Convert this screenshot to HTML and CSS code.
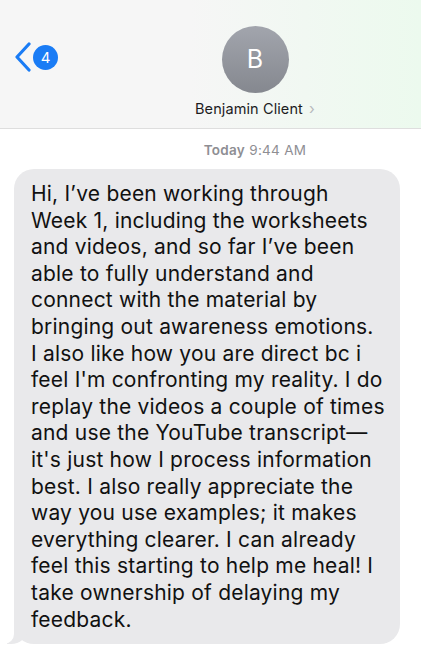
FILE: index.html
```html
<!DOCTYPE html>
<html>
<head>
    <title>Benjamin Client</title>
    <link rel="stylesheet" href="styles.css">
</head>
<body>
    <div class="header">
        <div class="back">
            <svg class="chevron" width="18" height="30" viewBox="0 0 18 30">
                <path d="M15 2 L3 15 L15 28" fill="none" stroke="#1a7cf5" stroke-width="3.2" stroke-linecap="round" stroke-linejoin="round"/>
            </svg>
            <span class="badge">4</span>
        </div>
        <div class="contact">
            <div class="avatar">B</div>
            <div class="name">Benjamin Client <span class="arrow">&#8250;</span></div>
        </div>
    </div>

    <div class="thread">
        <div class="time"><b>Today</b> 9:44 AM</div>
        <div class="bubble">Hi, I’ve been working through<br>
            Week 1, including the worksheets<br>
            and videos, and so far I’ve been<br>
            able to fully understand and<br>
            connect with the material by<br>
            bringing out awareness emotions.<br>
            I also like how you are direct bc i<br>
            feel I'm confronting my reality. I do<br>
            replay the videos a couple of times<br>
            and use the YouTube transcript—<br>
            it's just how I process information<br>
            best. I also really appreciate the<br>
            way you use examples; it makes<br>
            everything clearer. I can already<br>
            feel this starting to help me heal! I<br>
            take ownership of delaying my<br>
            feedback.</div>
    </div>
</body>
</html>
```

FILE: styles.css
```css
body {
    margin: 0;
    background-color: #fff;
    font-family: Inter, "Noto Sans", sans-serif;
    color: #111;
}
.header {
    display: flex;
    align-items: flex-start;
    height: 128px;
    border-bottom: 1px solid #dedede;
    background: linear-gradient(90deg, #f6f6f6 45%, #ecfaee 100%);
}
.back {
    display: flex;
    align-items: center;
    width: 188px;
    flex-shrink: 0;
    padding-top: 42px;
    padding-left: 14px;
    box-sizing: border-box;
}
.chevron {
    display: block;
}
.badge {
    width: 25px;
    height: 25px;
    border-radius: 50%;
    background-color: #1a7cf5;
    color: #fff;
    font-size: 15px;
    line-height: 25px;
    text-align: center;
    margin-left: 1px;
}
.contact {
    width: 134px;
    display: flex;
    flex-direction: column;
    align-items: center;
}
.avatar {
    width: 67px;
    height: 67px;
    margin-top: 26px;
    border-radius: 50%;
    background: linear-gradient(180deg, #a2a5ad, #85888f);
    color: #fff;
    font-size: 25px;
    line-height: 67px;
    text-align: center;
}
.name {
    margin-top: 7px;
    font-size: 14.5px;
    line-height: 17px;
    letter-spacing: 0.1px;
    white-space: nowrap;
    color: #1c1c1e;
}
.arrow {
    color: #b8b8bc;
    font-size: 15px;
    margin-left: 2px;
}
.thread {
    display: flex;
    flex-direction: column;
}
.time {
    margin-top: 13px;
    padding-left: 89px;
    text-align: center;
    font-size: 13.5px;
    line-height: 16px;
    letter-spacing: 0.3px;
    color: #8e8e93;
}
.time b {
    font-weight: 600;
}
.bubble {
    position: relative;
    margin-top: 11px;
    margin-left: 14px;
    width: 386px;
    box-sizing: border-box;
    padding: 12px 10px 11px 17px;
    background-color: #e9e9eb;
    border-radius: 20px;
    font-size: 21px;
    line-height: 26.6px;
    letter-spacing: 0.2px;
    white-space: nowrap;
}
.bubble::before {
    content: '';
    position: absolute;
    left: -7px;
    bottom: 0;
    width: 20px;
    height: 20px;
    background-color: #e9e9eb;
    border-bottom-right-radius: 16px 14px;
}
.bubble::after {
    content: '';
    position: absolute;
    left: -14px;
    bottom: 0;
    width: 14px;
    height: 22px;
    background-color: #fff;
    border-bottom-right-radius: 10px;
}
```
